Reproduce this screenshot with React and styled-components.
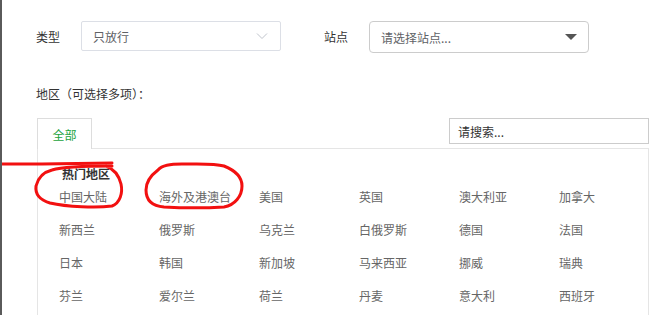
import styled, { createGlobalStyle } from "styled-components";

const GlobalStyle = createGlobalStyle`
  body {
    margin: 0;
    background: #fff;
    font-family: "Noto Sans CJK SC", "Noto Sans", sans-serif;
    font-size: 12px;
    color: #333;
  }
`;

const Page = styled.div`
  position: relative;
  width: 652px;
  height: 315px;
  overflow: hidden;
  box-sizing: border-box;
  border-left: 2px solid #5a5a5a;
  padding: 19px 0 0 34px;
`;

const FilterRow = styled.div`
  display: flex;
  align-items: center;
`;

const Label = styled.span`
  width: 45px;
  font-size: 12px;
  color: #333;
`;

const SelectBox = styled.div`
  box-sizing: border-box;
  width: ${(p) => p.$width}px;
  height: ${(p) => p.$height}px;
  margin-top: ${(p) => (p.$height > 30 ? 2 : 0)}px;
  margin-right: ${(p) => p.$gap || 0}px;
  border: 1px solid ${(p) => p.$border};
  border-radius: ${(p) => p.$radius}px;
  padding: 0 12px 0 11px;
  display: flex;
  align-items: center;
  justify-content: space-between;
  color: #606266;
  font-size: 12px;
`;

const Caret = styled.span`
  width: 0;
  height: 0;
  border-left: 6px solid transparent;
  border-right: 6px solid transparent;
  border-top: 6px solid #555;
  margin-right: -1px;
`;

const AreaLabel = styled.div`
  margin-top: 32px;
  font-size: 12px;
  color: #333;
`;

const Tabs = styled.div`
  margin: 16px 0 0 1px;
  width: 612px;
`;

const TabHeader = styled.div`
  display: flex;
  justify-content: space-between;
  align-items: flex-start;
  height: 30px;
`;

const Tab = styled.div`
  box-sizing: border-box;
  width: 55px;
  height: 31px;
  border: 1px solid #ddd;
  border-bottom: none;
  background: #fff;
  color: #23a33d;
  display: flex;
  align-items: center;
  justify-content: center;
  position: relative;
  z-index: 1;
`;

const Search = styled.div`
  box-sizing: border-box;
  width: 200px;
  height: 26px;
  border: 1px solid #ccc;
  padding-left: 8px;
  display: flex;
  align-items: center;
  color: #333;
`;

const Panel = styled.div`
  border: 1px solid #e5e5e5;
  border-bottom: none;
  height: 170px;
  padding: 16px 0 0 21px;
`;

const GroupTitle = styled.div`
  font-weight: bold;
  color: #333;
  padding-left: 3px;
  height: 17px;
  line-height: 17px;
`;

const Grid = styled.div`
  display: grid;
  grid-template-columns: repeat(6, 100px);
  grid-auto-rows: 33px;
  margin-top: -2px;
`;

const Item = styled.div`
  color: #666;
  display: flex;
  align-items: center;
  height: 33px;
`;

const Marks = styled.svg`
  position: absolute;
  left: 0;
  top: 0;
  pointer-events: none;
`;

const regions = [
  "中国大陆", "海外及港澳台", "美国", "英国", "澳大利亚", "加拿大",
  "新西兰", "俄罗斯", "乌克兰", "白俄罗斯", "德国", "法国",
  "日本", "韩国", "新加坡", "马来西亚", "挪威", "瑞典",
  "芬兰", "爱尔兰", "荷兰", "丹麦", "意大利", "西班牙",
];

export default function App() {
  return (
    <>
      <GlobalStyle />
      <Page>
        <FilterRow>
          <Label>类型</Label>
          <SelectBox $width={200} $height={30} $border="#dcdfe6" $radius={2} $gap={43}>
            只放行
            <svg width="12" height="8" viewBox="0 0 12 8">
              <path d="M1 1.5 L6 6.5 L11 1.5" fill="none" stroke="#c0c4cc" strokeWidth="1" />
            </svg>
          </SelectBox>
          <Label>站点</Label>
          <SelectBox $width={220} $height={32} $border="#ccc" $radius={4}>
            请选择站点...
            <Caret />
          </SelectBox>
        </FilterRow>
        <AreaLabel>地区（可选择多项）：</AreaLabel>
        <Tabs>
          <TabHeader>
            <Tab>全部</Tab>
            <Search>请搜索...</Search>
          </TabHeader>
          <Panel>
            <GroupTitle>热门地区</GroupTitle>
            <Grid>
              {regions.map((r) => (
                <Item key={r}>{r}</Item>
              ))}
            </Grid>
          </Panel>
        </Tabs>
        <Marks width="652" height="315" viewBox="0 0 652 315">
          <g fill="none" stroke="#f21010" strokeWidth="3" strokeLinecap="round" strokeLinejoin="round">
            <path d="M0 164 L40 164 L110 163" />
            <path d="M110 166 C80 166 60 167 50 170 C42 172 36 178 34 186 C33 194 38 200 48 203 C65 207 95 208 110 206 C118 203 121 193 119 184 C117 176 112 169 104 166" />
            <path d="M156 170 C160 165 168 164 180 164 C195 164 212 163 222 166 C232 170 240 176 240 186 C240 196 233 205 222 207 C205 208 180 208 162 207 C150 206 144 200 144 190 C144 183 148 176 156 170" />
          </g>
        </Marks>
      </Page>
    </>
  );
}
